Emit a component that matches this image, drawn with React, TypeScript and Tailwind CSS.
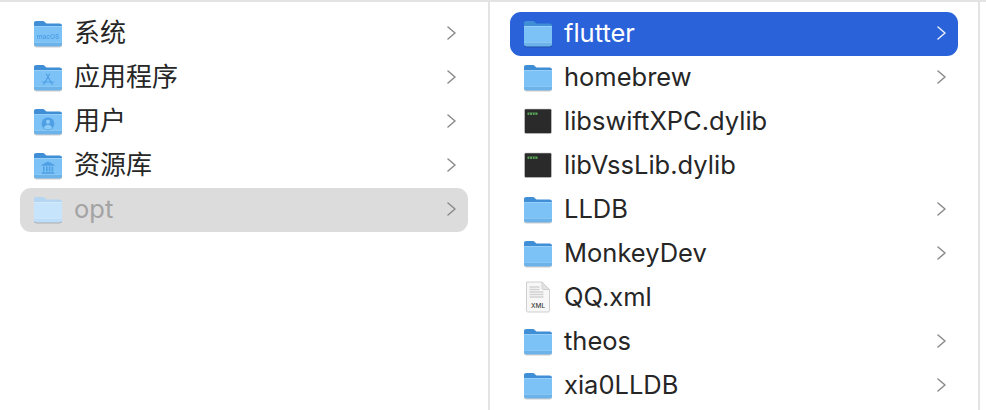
type Glyph = "macos" | "apps" | "user" | "bank";

type Item = {
  name: string;
  kind: "folder" | "exec" | "xml";
  glyph?: Glyph;
  arrow?: boolean;
  cjk?: boolean;
};

const LEFT: Item[] = [
  { name: "系统", kind: "folder", glyph: "macos", arrow: true, cjk: true },
  { name: "应用程序", kind: "folder", glyph: "apps", arrow: true, cjk: true },
  { name: "用户", kind: "folder", glyph: "user", arrow: true, cjk: true },
  { name: "资源库", kind: "folder", glyph: "bank", arrow: true, cjk: true },
  { name: "opt", kind: "folder", arrow: true },
];

const RIGHT: Item[] = [
  { name: "flutter", kind: "folder", arrow: true },
  { name: "homebrew", kind: "folder", arrow: true },
  { name: "libswiftXPC.dylib", kind: "exec" },
  { name: "libVssLib.dylib", kind: "exec" },
  { name: "LLDB", kind: "folder", arrow: true },
  { name: "MonkeyDev", kind: "folder", arrow: true },
  { name: "QQ.xml", kind: "xml" },
  { name: "theos", kind: "folder", arrow: true },
  { name: "xia0LLDB", kind: "folder", arrow: true },
];

function FolderGlyph({ glyph }: { glyph: Glyph }) {
  const c = "#4f9fe4";
  if (glyph === "macos") {
    return (
      <text x="15" y="18.5" textAnchor="middle" fontSize="6.5" fontWeight="600" fill={c} fontFamily="Inter, sans-serif">
        macOS
      </text>
    );
  }
  if (glyph === "apps") {
    return (
      <g stroke={c} strokeWidth="1.1" fill="none" strokeLinecap="round">
        <path d="M13.4 10l5.8 10.4M16.6 10l-5.8 10.4M9.5 18h11" />
      </g>
    );
  }
  if (glyph === "user") {
    return (
      <g>
        <circle cx="15" cy="15.8" r="6.4" fill={c} />
        <circle cx="15" cy="13.8" r="2.1" fill="#8ccbf7" />
        <path d="M10.9 20c.8-2.4 2.3-3.3 4.1-3.3s3.3.9 4.1 3.3a6 6 0 0 1-8.2 0z" fill="#8ccbf7" />
      </g>
    );
  }
  return (
    <g fill={c}>
      <path d="M15 9.5l6.5 3.3v1h-13v-1z" />
      <path d="M10 14.6h1.6v5H10zM13 14.6h1.6v5H13zM15.8 14.6h1.6v5h-1.6zM18.6 14.6h1.6v5h-1.6z" />
      <path d="M8.8 20.2h12.4v1.6H8.8z" />
    </g>
  );
}

function FolderIcon({ glyph, dim }: { glyph?: Glyph; dim?: boolean }) {
  const tab = dim ? "#b4d6f2" : "#3f8ed6";
  const body = dim ? "#c6e4fb" : "#7cc2f7";
  const edge = dim ? "#d8edfc" : "#a2d6f9";
  const band = dim ? "#bddef8" : "#6cb3ea";
  const line = dim ? "#d2e9fb" : "#93cdf6";
  return (
    <svg viewBox="0 0 30 27" className="h-[27px] w-[30px] shrink-0 drop-shadow-[0_1px_0.5px_rgba(0,0,0,0.22)]" aria-hidden="true">
      <path d="M1 3.2C1 1.8 1.8 1 3.2 1h6.4c1 0 1.5.3 2.1.9l1.8 1.7h13.2c1.4 0 2.3.9 2.3 2.3V12H1z" fill={tab} />
      <path d="M1 6.2h28v17.8c0 1.3-.9 2.2-2.2 2.2H3.2c-1.3 0-2.2-.9-2.2-2.2z" fill={body} />
      <path d="M1 6.2h28v.8H1z" fill={edge} />
      <path d="M1 22.2h28v1.8c0 1.3-.9 2.2-2.2 2.2H3.2c-1.3 0-2.2-.9-2.2-2.2z" fill={band} />
      <path d="M1 22h28v.7H1z" fill={line} />
      {glyph && <FolderGlyph glyph={glyph} />}
    </svg>
  );
}

function ExecIcon() {
  return (
    <svg viewBox="0 0 30 28" className="h-[28px] w-[30px] shrink-0" aria-hidden="true">
      <rect x="1" y="1.5" width="28" height="25.5" rx="1.5" fill="#dcdcdc" />
      <rect x="1.8" y="2.2" width="26.4" height="24" rx="1" fill="#2a2a2a" />
      <path d="M4.5 5.5h10v2.4h-10z" fill="#58a558" />
      <path d="M6.4 5.5h.7v2.4h-.7zM9 5.5h.7v2.4H9zM11.6 5.5h.7v2.4h-.7z" fill="#2a2a2a" />
    </svg>
  );
}

function XmlIcon() {
  return (
    <svg viewBox="0 0 30 32" className="h-[32px] w-[30px] shrink-0" aria-hidden="true">
      <path d="M3.5 1h15.5l7.5 7.5v21.2c0 .8-.5 1.3-1.3 1.3H4.8c-.8 0-1.3-.5-1.3-1.3z" fill="#f7f7f7" stroke="#cfcfcf" />
      <path d="M19 1v6.2c0 .8.5 1.3 1.3 1.3h6.2z" fill="#e2e2e2" stroke="#cfcfcf" />
      <path d="M6.5 6h10M6.5 8.5h10M6.5 11h14M6.5 13.5h14M6.5 16h14" stroke="#d2d2d2" strokeWidth="1.4" />
      <text x="15" y="27" textAnchor="middle" fontSize="6.5" fontWeight="500" fill="#444" fontFamily="Inter, sans-serif">
        XML
      </text>
    </svg>
  );
}

function Chevron({ white }: { white?: boolean }) {
  return (
    <svg viewBox="0 0 10 16" className="h-4 w-[10px] shrink-0" fill="none" aria-hidden="true">
      <path
        d="M1 2l7 6-7 6"
        stroke={white ? "#e8eefb" : "#8a8a8a"}
        strokeWidth="1.5"
        strokeLinecap="round"
        strokeLinejoin="round"
      />
    </svg>
  );
}

function Row({ item, state }: { item: Item; state?: "active" | "inactive" }) {
  const bg = state === "active" ? "bg-[#2962d9]" : state === "inactive" ? "bg-[#dcdcdc]" : "";
  const color = state === "active" ? "text-white" : state === "inactive" ? "text-[#a3a3a3]" : "text-[#262626]";
  return (
    <div className={`flex h-11 items-center rounded-[11px] pb-0.5 pl-[13px] pr-[11px] ${bg}`}>
      <div className="flex w-[30px] shrink-0 justify-center">
        {item.kind === "folder" && <FolderIcon glyph={item.glyph} dim={state === "inactive"} />}
        {item.kind === "exec" && <ExecIcon />}
        {item.kind === "xml" && <XmlIcon />}
      </div>
      <span className={`ml-[11px] flex-1 leading-none ${item.cjk ? "text-[26px]" : "text-[25.5px]"} ${color}`}>{item.name}</span>
      {item.arrow && <Chevron white={state === "active"} />}
    </div>
  );
}

function Column({ items, selected, state }: { items: Item[]; selected: string; state: "active" | "inactive" }) {
  return (
    <div className="flex h-full w-[490px] shrink-0 flex-col border-r-2 border-[#e3e3e3] pl-5 pr-[20px] pt-[10px]">
      {items.map((item) => (
        <Row key={item.name} item={item} state={item.name === selected ? state : undefined} />
      ))}
    </div>
  );
}

export default function App() {
  return (
    <div
      className="flex h-[410px] w-[986px] overflow-hidden border-t-2 border-[#e3e3e3] bg-white"
      style={{ fontFamily: "Inter, 'Noto Sans CJK SC', sans-serif" }}
    >
      <Column items={LEFT} selected="opt" state="inactive" />
      <Column items={RIGHT} selected="flutter" state="active" />
    </div>
  );
}
